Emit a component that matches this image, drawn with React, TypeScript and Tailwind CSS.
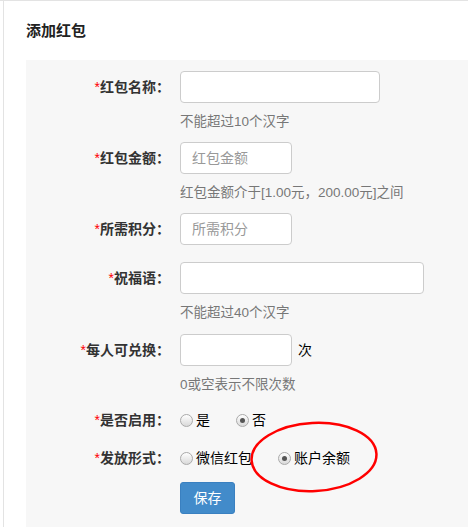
import type { ReactNode } from 'react';

const FONT = "font-['Liberation_Sans','Noto_Sans_CJK_SC',sans-serif]";

function Label({ children }: { children: ReactNode }) {
  return (
    <div className="w-[144px] shrink-0 text-right text-[14px] font-bold text-[#333]">
      <span className="text-[#ff0000] font-normal">*</span>
      {children}：
    </div>
  );
}

function Hint({ children }: { children: ReactNode }) {
  return <div className="ml-[154px] mt-[9px] h-[20px] leading-[20px] text-[13.5px] text-[#777]">{children}</div>;
}

function Input({ width, placeholder }: { width: string; placeholder?: string }) {
  return (
    <input
      className={`${width} h-[32px] rounded-[4px] border border-[#ccc] bg-white px-[11px] text-[14px] text-[#555] outline-none placeholder:text-[#999]`}
      placeholder={placeholder}
    />
  );
}

function Radio({ checked, label }: { checked?: boolean; label: string }) {
  return (
    <label className="mr-[26px] flex items-center">
      <span className="flex h-[13px] w-[13px] items-center justify-center rounded-full border border-[#aaa] bg-gradient-to-b from-white to-[#d9d9d9]">
        {checked && <span className="h-[5px] w-[5px] rounded-full bg-[#555]" />}
      </span>
      <span className="ml-[3px] text-[14px] text-black">{label}</span>
    </label>
  );
}

export default function App() {
  return (
    <div className={`${FONT} relative h-[527px] w-[468px] overflow-hidden border-t border-[#e3e3e3] bg-white`}>
      <div className="ml-[3px] h-full border-l border-[#e3e3e3]">
        <h3 className="pl-[22px] pt-[20px] h-[59px] text-[15px] font-bold leading-[20px] text-[#222]">添加红包</h3>

        <div className="ml-[22px] h-full bg-[#f7f7f7] pt-[11px]">
          {/* 红包名称 */}
          <div className="flex items-center gap-[10px]">
            <Label>红包名称</Label>
            <Input width="w-[200px]" />
          </div>
          <Hint>不能超过10个汉字</Hint>

          {/* 红包金额 */}
          <div className="mt-[10px] flex items-center gap-[10px]">
            <Label>红包金额</Label>
            <Input width="w-[112px]" placeholder="红包金额" />
          </div>
          <Hint>红包金额介于[1.00元，200.00元]之间</Hint>

          {/* 所需积分 */}
          <div className="mt-[10px] flex items-center gap-[10px]">
            <Label>所需积分</Label>
            <Input width="w-[112px]" placeholder="所需积分" />
          </div>

          {/* 祝福语 */}
          <div className="mt-[17px] flex items-center gap-[10px]">
            <Label>祝福语</Label>
            <Input width="w-[244px]" />
          </div>
          <Hint>不能超过40个汉字</Hint>

          {/* 每人可兑换 */}
          <div className="mt-[11px] flex items-center gap-[10px]">
            <Label>每人可兑换</Label>
            <div className="flex items-center">
              <Input width="w-[112px]" />
              <span className="ml-[6px] text-[14px] text-black">次</span>
            </div>
          </div>
          <Hint>0或空表示不限次数</Hint>

          {/* 是否启用 */}
          <div className="mt-[9px] flex h-[32px] items-center gap-[10px]">
            <Label>是否启用</Label>
            <div className="flex items-center">
              <Radio label="是" />
              <Radio label="否" checked />
            </div>
          </div>

          {/* 发放形式 */}
          <div className="mt-[6px] flex h-[32px] items-center gap-[10px]">
            <Label>发放形式</Label>
            <div className="flex items-center">
              <Radio label="微信红包" />
              <Radio label="账户余额" checked />
            </div>
          </div>

          <div className="mt-[8px] ml-[154px]">
            <button className="h-[32px] w-[55px] rounded-[3px] border border-[#3a80c0] bg-[#428bca] text-[14px] text-white">
              保存
            </button>
          </div>
        </div>
      </div>

      {/* red annotation circle */}
      <svg className="pointer-events-none absolute left-[247px] top-[418px]" width="134" height="78" viewBox="0 0 134 78">
        <ellipse cx="67" cy="38" rx="62.5" ry="34" fill="none" stroke="#ff0000" strokeWidth="2.5" transform="rotate(-3 67 38)" />
      </svg>
    </div>
  );
}
